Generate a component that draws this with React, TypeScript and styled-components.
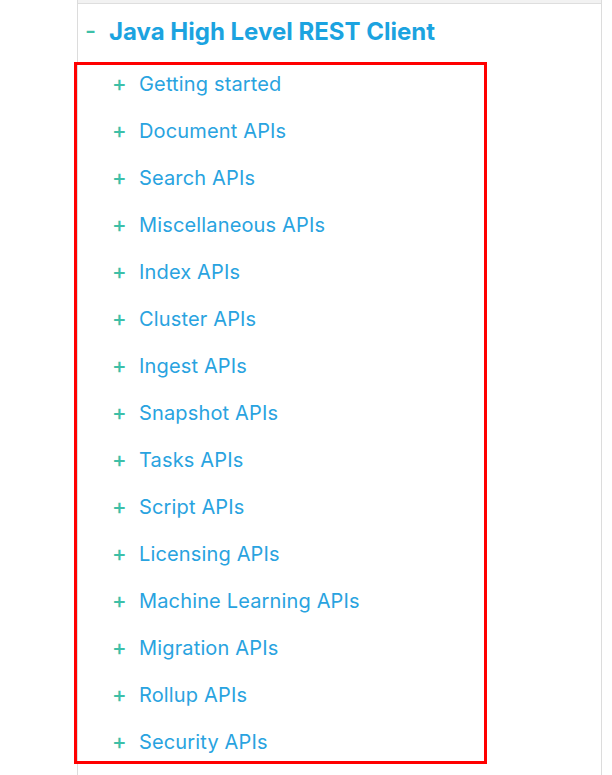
import React from 'react';
import styled, { createGlobalStyle } from 'styled-components';

const GlobalStyle = createGlobalStyle`
  html, body {
    margin: 0;
    padding: 0;
    background: #fff;
    font-family: Inter, "Noto Sans", sans-serif;
  }
`;

const Page = styled.div`
  display: flex;
  width: 612px;
  height: 775px;
  overflow: hidden;
`;

const Panel = styled.nav`
  margin-left: 77px;
  width: 523px;
  height: 775px;
  border-left: 1px solid #dcdcdc;
  border-right: 1px solid #dcdcdc;
  display: flex;
  flex-direction: column;
`;

const TopStrip = styled.div`
  height: 3px;
  background: #f2f2f2;
  border-bottom: 1px solid #dedede;
`;

const Heading = styled.div`
  display: flex;
  align-items: center;
  height: 58px;
  padding-left: 7px;
  box-sizing: border-box;
  padding-bottom: 4px;
`;

const Toggle = styled.span<{ $big?: boolean }>`
  color: #3dbfa8;
  line-height: 1;
  font-weight: 500;
  font-size: ${({ $big }) => ($big ? '24px' : '22px')};
  width: ${({ $big }) => ($big ? '24px' : '27px')};
  padding-bottom: ${({ $big }) => ($big ? '0' : '2px')};
`;

const Title = styled.span`
  color: #1ba3e0;
  font-weight: 700;
  font-size: 24px;
`;

const List = styled.ul`
  list-style: none;
  margin: 0 0 0 -4px;
  padding: 0 0 0 35px;
  width: 413px;
  box-sizing: border-box;
  border: 3px solid #ff0000;
  display: flex;
  flex-direction: column;
  gap: 9px;
`;

const Item = styled.li`
  display: flex;
  align-items: center;
  height: 38px;
  font-size: 20px;
  font-weight: 400;
  letter-spacing: 0.15px;
  color: #29a3e0;
`;

const items = [
  'Getting started',
  'Document APIs',
  'Search APIs',
  'Miscellaneous APIs',
  'Index APIs',
  'Cluster APIs',
  'Ingest APIs',
  'Snapshot APIs',
  'Tasks APIs',
  'Script APIs',
  'Licensing APIs',
  'Machine Learning APIs',
  'Migration APIs',
  'Rollup APIs',
  'Security APIs',
];

export default function App() {
  return (
    <Page>
      <GlobalStyle />
      <Panel>
        <TopStrip />
        <Heading>
          <Toggle $big>-</Toggle>
          <Title>Java High Level REST Client</Title>
        </Heading>
        <List>
          {items.map((label) => (
            <Item key={label}>
              <Toggle>+</Toggle>
              {label}
            </Item>
          ))}
        </List>
      </Panel>
    </Page>
  );
}
